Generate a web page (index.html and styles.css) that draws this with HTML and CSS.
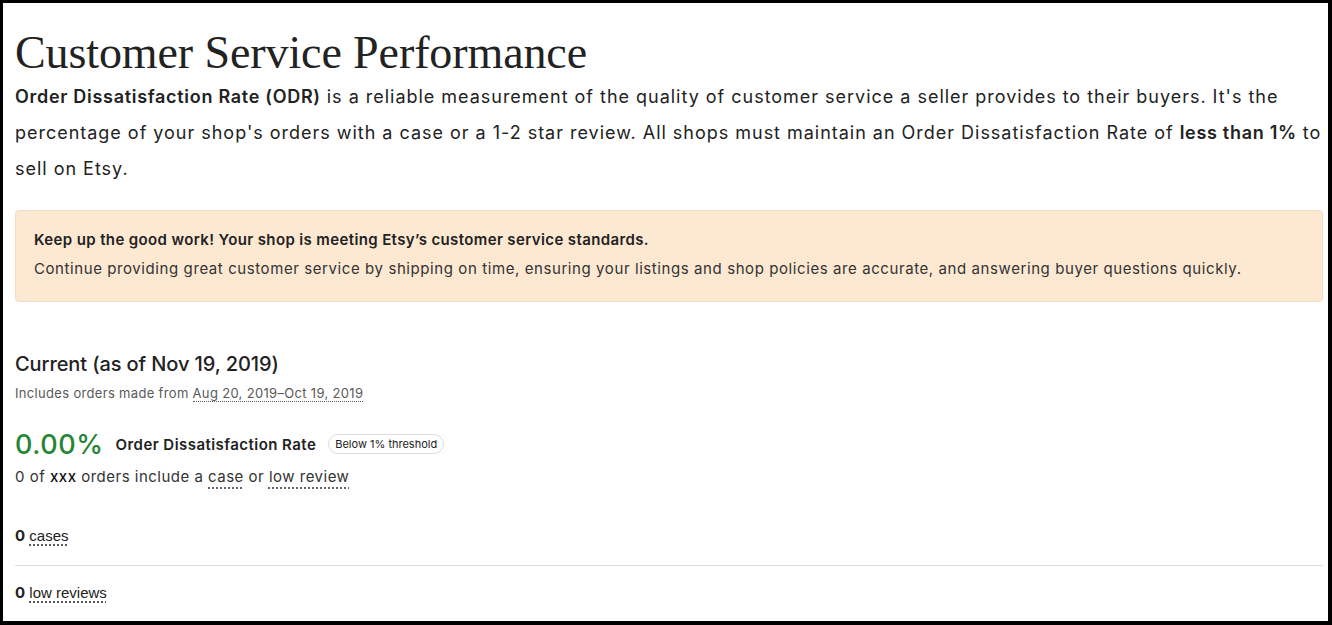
FILE: index.html
```html
<!DOCTYPE html>
<html lang="en">
<head>
<meta charset="utf-8">
<title>Customer Service Performance</title>
<link rel="stylesheet" href="styles.css">
</head>
<body>
<div class="frame">
  <main class="page">
    <h1 class="title">Customer Service Performance</h1>
    <p class="intro"><strong>Order Dissatisfaction Rate (ODR)</strong> is a reliable measurement of the quality of customer service a seller provides to their buyers. It's the percentage of your shop's orders with a case or a 1-2 star review. All shops must maintain an Order Dissatisfaction Rate of <strong>less than 1%</strong> to sell on Etsy.</p>

    <div class="notice">
      <p class="notice-title">Keep up the good work! Your shop is meeting Etsy’s customer service standards.</p>
      <p class="notice-text">Continue providing great customer service by shipping on time, ensuring your listings and shop policies are accurate, and answering buyer questions quickly.</p>
    </div>

    <section class="current">
      <h2 class="current-title">Current (as of Nov 19, 2019)</h2>
      <p class="range">Includes orders made from <span class="dotted">Aug 20, 2019–Oct 19, 2019</span></p>
      <div class="rate-row">
        <span class="rate">0.00%</span>
        <span class="rate-label">Order Dissatisfaction Rate</span>
        <span class="badge">Below 1% threshold</span>
      </div>
      <p class="orders">0 of <span class="xxx">xxx</span> orders include a <span class="dotted-far">case</span> or <span class="dotted-far">low review</span></p>
    </section>

    <ul class="counts">
      <li class="count-row"><b>0</b> <span class="dotted-link">cases</span></li>
      <li class="count-row"><b>0</b> <span class="dotted-link">low reviews</span></li>
    </ul>
  </main>
</div>
</body>
</html>
```

FILE: styles.css
```css
* { box-sizing: border-box; }
html, body { margin: 0; padding: 0; background: #fff; }
.frame {
  width: 1332px;
  height: 625px;
  border-style: solid;
  border-color: #000;
  border-width: 3px 4px 4px 3px;
  overflow: hidden;
  background: #fff;
}
.page {
  padding: 24px 5px 0 12px;
  font-family: "Inter", "Liberation Sans", sans-serif;
  color: #222;
  letter-spacing: 0.04em;
}
.title {
  margin: 0;
  font-family: "Liberation Serif", serif;
  font-weight: normal;
  font-size: 46px;
  line-height: 52px;
  letter-spacing: -0.1px;
  color: #222;
}
.intro {
  margin: 0 -4px 0 0;
  font-size: 18px;
  line-height: 36px;
  color: #222;
  letter-spacing: 0.98px;
}
.intro strong { font-weight: 600; letter-spacing: 0.7px; }
.notice {
  margin-top: 23px;
  background: #fde8d2;
  border: 1px solid #f3dcc3;
  border-radius: 4px;
  padding: 15px 18px 17px;
}
.notice p { margin: 0; font-size: 15px; }
.notice-title { font-weight: 600; line-height: 28px; letter-spacing: 0.025em; }
.notice-text { line-height: 30px; color: #333; letter-spacing: 0.039em; }
.current { margin-top: 48px; }
.current-title {
  margin: 0;
  font-size: 20px;
  font-weight: 500;
  line-height: 28px;
  letter-spacing: -0.1px;
}
.range {
  margin: 5px 0 0;
  font-size: 13px;
  line-height: 20px;
  color: #595959;
  letter-spacing: 0.025em;
}
.dotted {
  border-bottom: 1px dotted #595959;
}
.rate-row {
  display: flex;
  align-items: center;
  gap: 12px;
  margin-top: 24px;
  height: 34px;
}
.rate {
  font-size: 27px;
  font-weight: 500;
  color: #258635;
  letter-spacing: 0.02em;
}
.rate-label { font-size: 15px; font-weight: 600; letter-spacing: 0.03em; }
.badge {
  font-size: 11px;
  line-height: 16px;
  padding: 1px 6px;
  border: 1px solid #ddd;
  border-radius: 10px;
  color: #222;
  letter-spacing: 0;
}
.orders {
  margin: 3px 0 0;
  font-size: 15px;
  line-height: 26px;
  color: #333;
  letter-spacing: 0.033em;
}
.xxx { color: #111; font-weight: 500; }
.dotted-far {
  text-decoration: underline dotted #333;
  text-underline-offset: 6px;
}
.counts {
  list-style: none;
  margin: 36px 0 0;
  padding: 0;
}
.count-row {
  font-family: "Liberation Sans", Arial, sans-serif;
  font-size: 15px;
  line-height: 20px;
  color: #222;
  letter-spacing: 0;
  padding-bottom: 19px;
}
.count-row + .count-row {
  border-top: 1px solid #ddd;
  padding-top: 17px;
}
.count-row b { font-family: "Inter", sans-serif; font-weight: 700; }
.dotted-link {
  text-decoration: underline dotted #222;
  text-underline-offset: 4px;
}
```
